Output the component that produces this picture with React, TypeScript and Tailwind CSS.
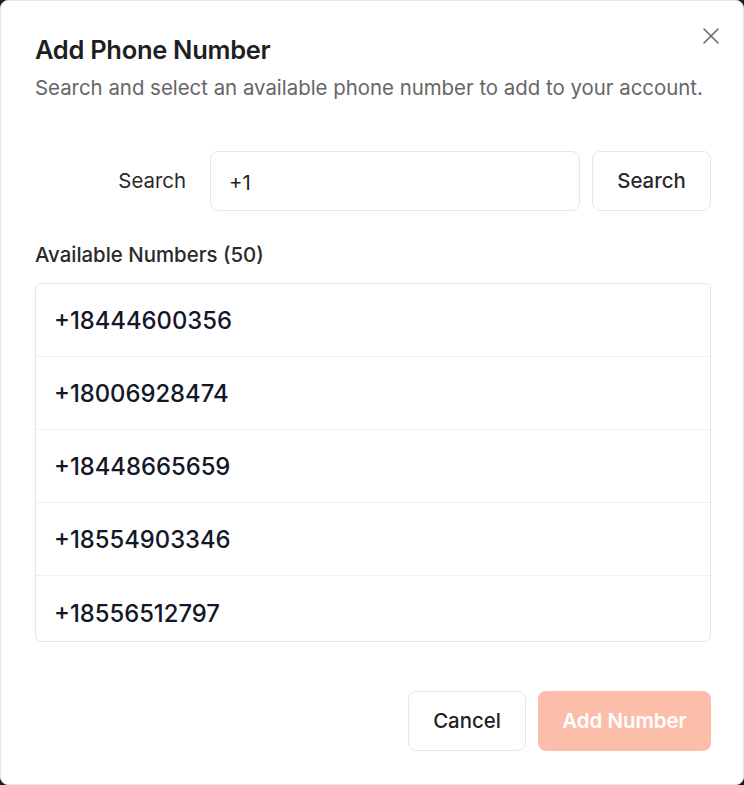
import { X } from "lucide-react";

const numbers = [
  "+18444600356",
  "+18006928474",
  "+18448665659",
  "+18554903346",
  "+18556512797",
];

export default function App() {
  return (
    <div
      className="h-[785px] w-[744px] bg-[#1c1c1e]"
      style={{ fontFamily: "Inter, 'Liberation Sans', sans-serif" }}
    >
      <div className="relative flex h-full w-full flex-col rounded-lg border border-[#e5e7eb] bg-white pl-[34px] pr-[32px] pt-[32px]">
        <button className="absolute right-[18px] top-[21px] text-[#6b6b6b]" aria-label="Close">
          <X size={28} strokeWidth={1.4} />
        </button>

        {/* Header */}
        <h2 className="text-[25.5px] font-semibold leading-[34px] tracking-[-0.3px] text-[#1f1f1f]">
          Add Phone Number
        </h2>
        <p className="mt-[7px] text-[20.4px] leading-[28px] text-[#666]">
          Search and select an available phone number to add to your account.
        </p>

        {/* Search */}
        <div className="mt-[49px] flex h-[60px] items-center">
          <label className="w-[151px] text-right text-[20.4px] text-[#2a2a2a]">Search</label>
          <input
            defaultValue="+1"
            className="ml-6 h-[60px] w-[370px] rounded-lg border border-[#e5e7eb] px-[18px] pt-[2px] text-[20.4px] text-[#1f1f1f] outline-none"
          />
          <button className="ml-3 h-[60px] flex-1 rounded-lg border border-[#e5e7eb] text-[20.4px] font-medium text-[#2a2a2a]">
            Search
          </button>
        </div>

        {/* List */}
        <div className="mt-[30px] text-[20.4px] font-medium leading-[28px] text-[#2a2a2a]">
          Available Numbers (50)
        </div>
        <div className="mt-[14px] h-[359px] overflow-hidden rounded-md border border-[#e5e7eb]">
          {numbers.map((n) => (
            <div
              key={n}
              className="flex h-[73px] shrink-0 items-center border-b border-[#f0f0f2] px-[18px] pt-[2px] text-[23.8px] font-medium text-[#111827] last:border-b-0"
            >
              {n}
            </div>
          ))}
        </div>

        {/* Footer */}
        <div className="mt-[49px] flex justify-end gap-3">
          <button className="h-[60px] w-[118px] rounded-lg border border-[#e5e7eb] bg-white text-[20.4px] font-medium text-[#1f1f1f]">
            Cancel
          </button>
          <button className="h-[60px] w-[173px] rounded-lg bg-[#fdbdab] text-[20.4px] font-semibold text-white">
            Add Number
          </button>
        </div>
      </div>
    </div>
  );
}
